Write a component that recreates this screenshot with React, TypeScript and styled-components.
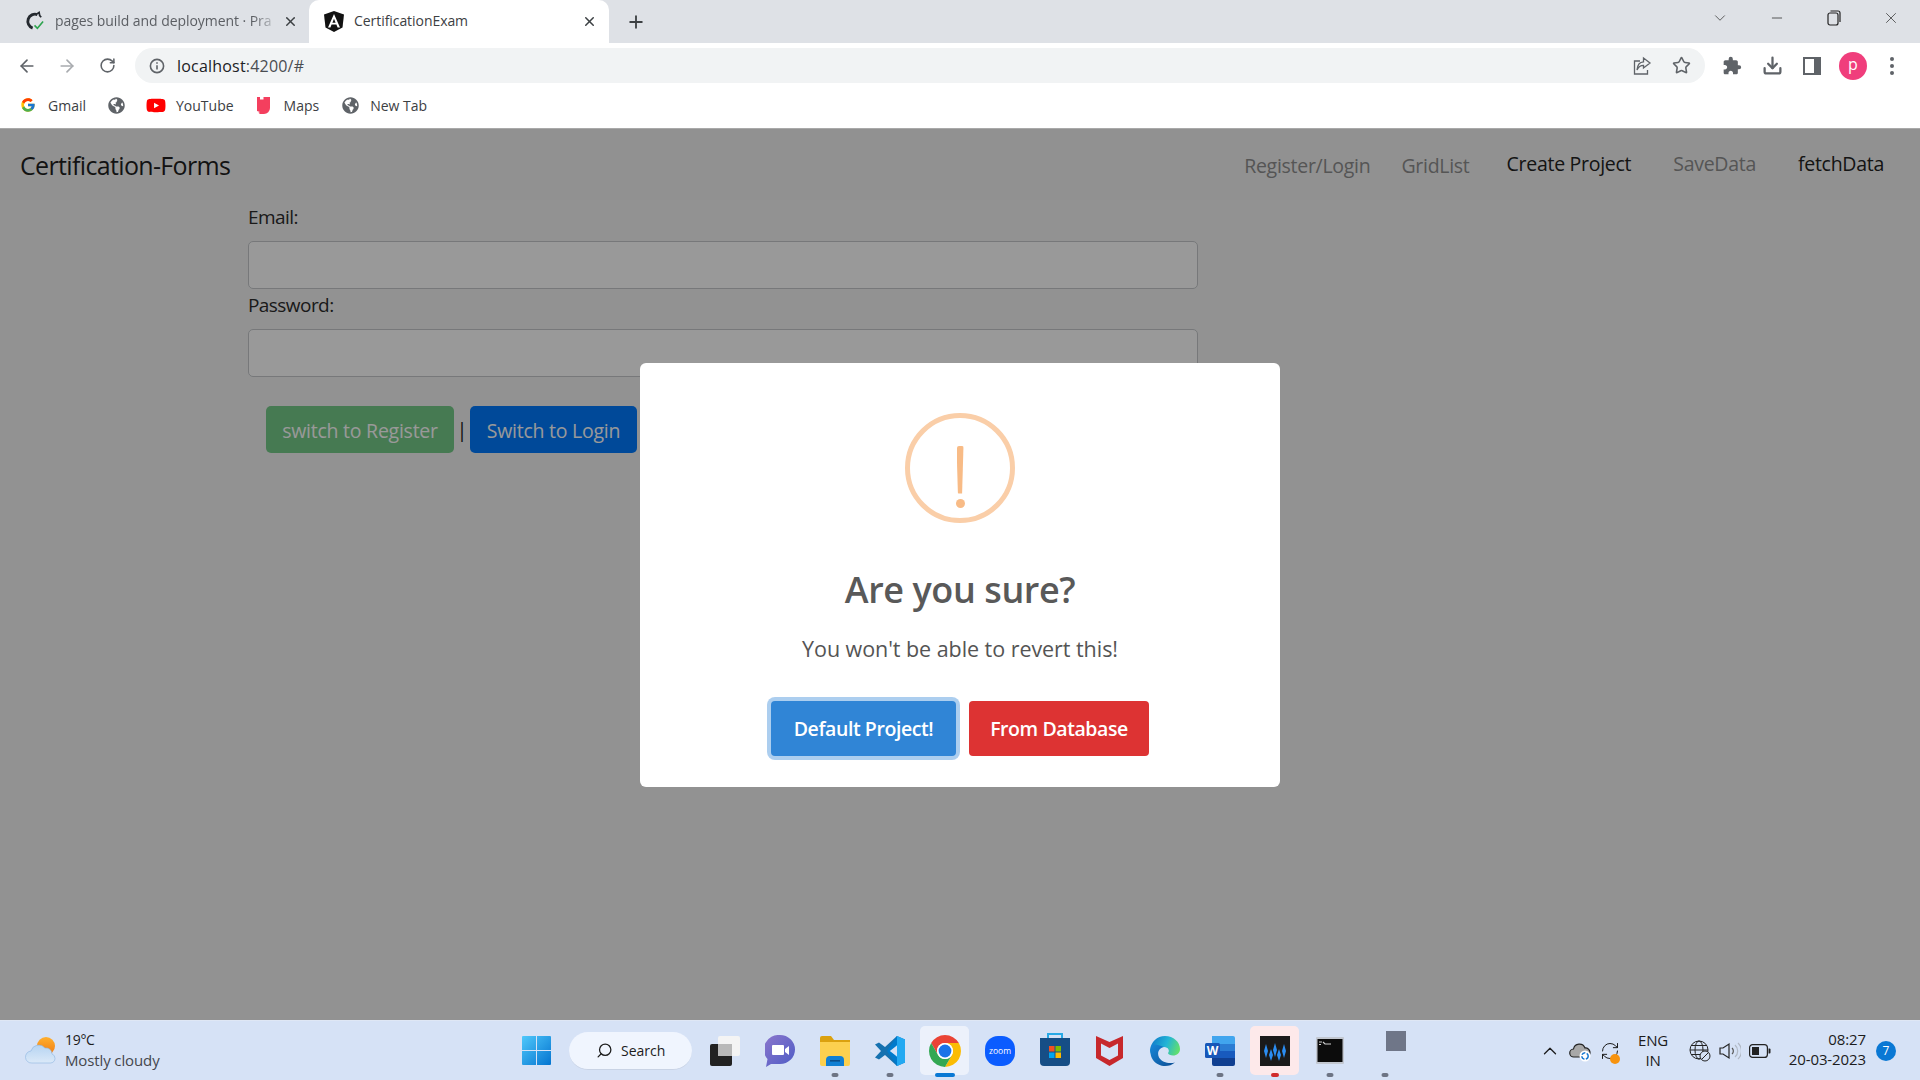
import React from "react";
import styled, { createGlobalStyle } from "styled-components";
import { ArrowLeft, ArrowRight, RotateCw, Star, Download, ChevronDown, ChevronUp, Minus, X, Plus, Search as SearchGlyph, RefreshCw } from "lucide-react";
import { FaGlobeAmericas, FaYoutube } from "react-icons/fa";
import { MdExtension } from "react-icons/md";
import { FcGoogle } from "react-icons/fc";

const FONT = `"Open Sans", "Noto Sans", "Liberation Sans", sans-serif`;

const Global = createGlobalStyle`
  html, body { margin: 0; padding: 0; height: 100%; }
  body { font-family: ${FONT}; overflow: hidden; }
  #root { height: 100%; }
  * { box-sizing: border-box; }
`;

const Screen = styled.div`
  width: 1920px; height: 1080px; display: flex; flex-direction: column; background: #fff;
`;

/* ---------- browser chrome ---------- */
const TabStrip = styled.div`
  height: 43px; background: #dee1e6; display: flex; align-items: stretch; flex: none;
`;
const Tab = styled.div<{ $active?: boolean }>`
  width: ${p => (p.$active ? "300px" : "309px")};
  padding-left: ${p => (p.$active ? "15px" : "25px")};
  padding-right: ${p => (p.$active ? "12px" : "11px")};
  background: ${p => (p.$active ? "#fff" : "transparent")};
  border-radius: 10px 10px 0 0;
  display: flex; align-items: center; flex: none; position: relative;
`;
const FavIcon = styled.span`
  width: 20px; height: 20px; flex: none; display: flex; align-items: center; justify-content: center;
`;
const TabTitle = styled.span<{ $fade?: boolean }>`
  margin: 0 0 2px 10px; flex: 1; min-width: 0; white-space: nowrap;
  font-size: 14px; letter-spacing: -0.06px; color: ${p => (p.$fade ? "#5b5e63" : "#3c4043")};
  ${p => p.$fade && "mask-image: linear-gradient(to right, #000 87%, transparent 99%);"}
`;
const TabClose = styled.span`
  width: 16px; height: 16px; flex: none; display: flex; align-items: center; justify-content: center; color: #3c4043;
`;
const NewTab = styled.span`
  margin-left: 17px; align-self: center; display: flex; color: #3c4043;
`;
const WindowControls = styled.div`
  margin-left: auto; display: flex; align-items: flex-start; padding-top: 9px; padding-right: 20px; color: #333;
`;
const WinBtn = styled.span<{ $ml: number }>`
  margin-left: ${p => p.$ml}px; display: flex; width: 18px; height: 18px; align-items: center; justify-content: center;
`;

const Toolbar = styled.div`
  height: 43px; flex: none; display: flex; align-items: center; padding: 5px 0 3px 17px; background: #fff;
`;
const NavBtn = styled.span<{ $ml?: number; $dim?: boolean }>`
  margin-left: ${p => p.$ml ?? 0}px; display: flex; width: 20px; height: 20px; align-items: center; justify-content: center;
  color: ${p => (p.$dim ? "#a8abaf" : "#5f6368")};
`;
const Omnibox = styled.div`
  margin-left: 18px; width: 1570px; height: 35px; border-radius: 18px; background: #f1f3f4;
  display: flex; align-items: center; padding-left: 14px; padding-right: 14px;
`;
const UrlText = styled.span`
  margin-left: 12px; font-size: 16px; letter-spacing: 0.2px; color: #202124;
`;
const UrlTail = styled.span`
  color: #4a4d51;
`;
const OmniRight = styled.div`
  margin-left: auto; display: flex; align-items: center; gap: 20px; color: #5f6368;
`;
const ExtIcons = styled.div`
  margin-left: 17px; display: flex; align-items: center; color: #5f6368;
`;
const ExtBtn = styled.span<{ $w: number }>`
  width: ${p => p.$w}px; display: flex; justify-content: center; align-items: center;
`;
const Avatar = styled.span`
  width: 28px; height: 28px; border-radius: 50%; background: #f03e7c; color: #fff;
  font-size: 16px; display: flex; align-items: center; justify-content: center; padding-bottom: 3px;
`;

const Bookmarks = styled.div`
  height: 43px; flex: none; display: flex; align-items: center; padding: 0 0 4px 18px; background: #fff;
  border-bottom: 1px solid #a9a9a9;
`;
const Bookmark = styled.div<{ $ml: number }>`
  margin-left: ${p => p.$ml}px; display: flex; align-items: center; gap: 10px;
  font-size: 14px; letter-spacing: 0; color: #3c4043;
`;
const BookmarkIcon = styled.span<{ $color?: string }>`
  width: 20px; height: 20px; display: flex; align-items: center; justify-content: center; color: ${p => p.$color ?? "#5f6368"};
`;

/* ---------- app page ---------- */
const Page = styled.div`
  flex: 1; position: relative; background: #f4f4f4; display: flex; flex-direction: column;
`;
const Navbar = styled.nav`
  height: 71px; flex: none; display: flex; align-items: center; padding-left: 20px; background: #f2f2f2;
`;
const Brand = styled.div`
  font-size: 25px; letter-spacing: -0.65px; color: #1f1f1f;
`;
const NavLinks = styled.div`
  margin-left: auto; padding-right: 36px; display: flex; align-items: center;
`;
const NavLink = styled.span<{ $ml: number; $strong?: boolean; $drop?: number }>`
  margin-left: ${p => p.$ml}px; margin-top: ${p => p.$drop ?? 0}px; font-size: 19.5px; letter-spacing: -0.28px;
  color: ${p => (p.$strong ? "#222" : "#8e8e8e")};
`;
const Form = styled.form`
  margin-left: 248px; width: 950px; padding-top: 4px; display: flex; flex-direction: column;
`;
const Label = styled.label`
  display: block; height: 27px; line-height: 27px; margin: 0 0 10px; font-size: 19px; letter-spacing: -0.56px; color: #2c2c2c;
  input + & { margin-top: 3px; }
`;
const Input = styled.input`
  height: 48px; width: 100%; background: #fff; border: 1px solid #c6c9cc; border-radius: 5px; display: block;
`;
const FormActions = styled.div`
  display: flex; align-items: center; margin: 29px 0 0 18px; color: #333;
`;
const ActionButton = styled.button<{ $bg: string; $w: number; $fg?: string }>`
  width: ${p => p.$w}px; height: 47px; background: ${p => p.$bg}; color: ${p => p.$fg ?? "#fff"}; border: 0; border-radius: 5px;
  font-family: ${FONT}; font-size: 19.5px; letter-spacing: -0.25px; padding: 2px 0 0;
`;
const Divider = styled.span`
  width: 16px; text-align: center; font-size: 20px; color: #222;
`;
const Overlay = styled.div`
  position: absolute; inset: 0; background: rgba(0, 0, 0, 0.4); display: flex; align-items: center; justify-content: center;
`;
const Modal = styled.div`
  width: 640px; height: 424px; background: #fff; border-radius: 6px; padding-top: 50px;
  display: flex; flex-direction: column; align-items: center;
`;
const WarnIcon = styled.div`
  width: 110px; height: 110px; border-radius: 50%; border: 5px solid #facea8; display: flex; flex-direction: column; align-items: center; flex: none;
`;
const WarnBar = styled.span`
  width: 7px; height: 48px; background: #f8bb86; border-radius: 2px; margin-top: 28px;
  clip-path: polygon(0 0, 100% 0, 80% 100%, 20% 100%);
`;
const WarnDot = styled.span`
  width: 9px; height: 9px; background: #f8bb86; border-radius: 50%; margin-top: 5px;
`;
const Title = styled.h2`
  margin: 42px 0 0; height: 50px; line-height: 50px; font-size: 36px; font-weight: 600; letter-spacing: -0.42px; color: #595959;
`;
const Subtitle = styled.p`
  margin: 19px 0 0; height: 30px; line-height: 30px; font-size: 21.5px; letter-spacing: -0.05px; color: #545454;
`;
const ModalActions = styled.div`
  margin-top: 37px; display: flex; gap: 13px;
`;
const ModalButton = styled.button<{ $bg: string; $w: number; $focus?: boolean }>`
  width: ${p => p.$w}px; height: 55px; border: 0; border-radius: 4px; background: ${p => p.$bg}; color: #fff; padding: 0;
  font-family: ${FONT}; font-size: 19.5px; font-weight: 600; letter-spacing: -0.42px;
  ${p => p.$focus && "box-shadow: 0 0 0 4px rgba(48, 133, 214, 0.4);"}
`;

/* ---------- taskbar ---------- */
const Taskbar = styled.div`
  height: 60px; flex: none; background: #d6e2f6; border-top: 1px solid #dfe7f5; display: flex; align-items: center; padding-left: 25px; padding-right: 24px;
`;
const Weather = styled.div`
  width: 497px; flex: none; display: flex; align-items: center; gap: 8px;
`;
const WeatherText = styled.div`
  font-size: 14px; line-height: 20px; letter-spacing: -0.3px; color: #1c1c1c; padding-bottom: 2px;
`;
const WeatherSub = styled.div`
  font-size: 15px; letter-spacing: -0.12px; color: #45474d;
`;
const SearchPill = styled.div`
  width: 123px; height: 38px; margin-left: 18px; flex: none; background: #f0f5fe; border-radius: 19px; border-bottom: 1px solid #c9d3e5;
  display: flex; align-items: center; padding-left: 27px; gap: 8px; font-size: 14px; letter-spacing: 0; color: #1c1c1c;
`;
const Slots = styled.div`
  margin-left: 5px; display: flex; align-items: stretch; height: 59px;
`;
const Slot = styled.div`
  width: 55px; display: flex; align-items: center; justify-content: center; position: relative;
`;
const SlotHighlight = styled.div<{ $bg: string }>`
  width: 49px; height: 49px; border-radius: 5px; background: ${p => p.$bg}; display: flex; align-items: center; justify-content: center;
`;
const Indicator = styled.span<{ $w?: number; $color?: string }>`
  position: absolute; bottom: 3px; left: 50%; transform: translateX(-50%); width: ${p => p.$w ?? 7}px; height: 4px; border-radius: 2px; background: ${p => p.$color ?? "#6d7484"};
`;
const GreySquare = styled.span`
  width: 20px; height: 20px; background: #6f7688; margin: -20px 0 0 22px;
`;
const Tray = styled.div`
  margin-left: auto; display: flex; align-items: center; color: #1c1c1c;
`;
const TrayItem = styled.span<{ $w?: number }>`
  width: ${p => p.$w ?? 30}px; display: flex; align-items: center; justify-content: center; position: relative;
`;
const Lang = styled.div`
  width: 56px; margin-right: 4px; padding-bottom: 2px; text-align: center; font-size: 15px; line-height: 20px; letter-spacing: -0.2px; color: #1c1c1c;
`;
const Clock = styled.div`
  width: 91px; padding-bottom: 3px; text-align: right; font-size: 15px; line-height: 20px; letter-spacing: -0.1px; color: #1c1c1c;
`;
const Badge = styled.span`
  width: 20px; height: 20px; margin-left: 10px; border-radius: 50%; background: #0a78d4; color: #fff; font-size: 12px;
  display: flex; align-items: center; justify-content: center;
`;
const SyncDot = styled.span`
  position: absolute; right: 5px; bottom: -3px; width: 10px; height: 10px; border-radius: 50%; background: #f7930e;
`;

/* ---------- drawn icons ---------- */
const GithubRunIcon = () => (
  <svg width="21" height="21" viewBox="0 0 21 21" fill="none">
    <path d="M13 3.200A7.300 7.300 0 1 0 8 17.400" stroke="#24292f" strokeWidth="3" />
    <path d="M12.500 2.500l2.300-1.500.6 3.200 1.600 1.900" stroke="#24292f" strokeWidth="1.800" />
    <path d="M10 14.600l3 3 6-7" stroke="#2da44e" strokeWidth="1.700" />
  </svg>
);
const AngularIcon = () => (
  <svg width="20" height="21" viewBox="0 0 20 21">
    <path fill="#111" d="M10 0l10 3.500-1.500 12.900L10 21l-8.500-4.600L0 3.500z" />
    <path fill="#fff" d="M10 3L4 16.500h2.400l1.200-3h4.800l1.200 3H16zM10 7.800l1.600 3.900H8.400z" fillRule="evenodd" />
  </svg>
);
const InfoIcon = () => (
  <svg width="16" height="16" viewBox="0 0 16 16" fill="none" stroke="#5f6368" strokeWidth="1.600">
    <circle cx="8" cy="8" r="6.600" /><path d="M8 7.200v4.200" /><path d="M8 4.200v1.600" />
  </svg>
);
const ShareIcon = () => (
  <svg width="20" height="20" viewBox="0 0 20 20" fill="none" stroke="#5f6368" strokeWidth="1.300">
    <path d="M8 5H2.500v13h13v-4" /><path d="M11.500 2l6.500 5-6.500 5V9.300C8.500 9.300 6.500 10.500 5 14c.4-5 2.800-8 6.500-8.200z" />
  </svg>
);
const PanelIcon = () => (
  <svg width="18" height="18" viewBox="0 0 18 18"><path fillRule="evenodd" fill="#5f6368" d="M0 0h18v18H0zM2 2v14h9V2z" /></svg>
);
const KebabIcon = () => (
  <svg width="16" height="20" viewBox="0 0 16 20" fill="#5f6368"><circle cx="8" cy="3" r="2" /><circle cx="8" cy="10" r="2" /><circle cx="8" cy="17" r="2" /></svg>
);
const RestoreIcon = () => (
  <svg width="14" height="16" viewBox="0 0 14 16" fill="none" stroke="#222" strokeWidth="1.200">
    <rect x="1" y="3" width="10" height="12" rx="2" /><path d="M3.500 1H11a2 2 0 0 1 2 2v9" />
  </svg>
);
const MapsIcon = () => (
  <svg width="13" height="17" viewBox="0 0 13 17"><path fill="#f43f5e" d="M0 0h3v2.500h3.500V0H13v11a6 6 0 0 1-6 6H3l-1.600-1.200L3 15 0 14z" /></svg>
);
const WeatherIcon = () => (
  <svg width="32" height="30" viewBox="0 0 32 30">
    <defs>
      <linearGradient id="sun" x1="0" y1="0" x2="0" y2="1"><stop offset="0" stopColor="#ffb02e" /><stop offset="1" stopColor="#f07b14" /></linearGradient>
      <linearGradient id="cloud" x1="0" y1="0" x2="0" y2="1"><stop offset="0" stopColor="#b6d4f2" /><stop offset="1" stopColor="#dbe9f8" /></linearGradient>
    </defs>
    <circle cx="21" cy="10" r="9" fill="url(#sun)" />
    <path fill="url(#cloud)" stroke="#8db6e0" strokeWidth=".6" d="M7 27a6 6 0 0 1-1-12 8 8 0 0 1 14-3 6 6 0 0 1 7 6 4.600 4.600 0 0 1 3 4.400A4.600 4.600 0 0 1 25.500 27z" />
  </svg>
);
const WindowsIcon = () => (
  <svg width="29" height="29" viewBox="0 0 29 29" style={{ flex: "none" }}>
    <defs><linearGradient id="win" x1="0" y1="0" x2="1" y2="1"><stop offset="0" stopColor="#4fc8fb" /><stop offset="1" stopColor="#0474d0" /></linearGradient></defs>
    <path fill="url(#win)" d="M0 1a1 1 0 0 1 1-1h13v14H0zM15 0h13a1 1 0 0 1 1 1v13H15zM0 15h14v14H1a1 1 0 0 1-1-1zM15 15h14v13a1 1 0 0 1-1 1H15z" />
  </svg>
);
const StackIcon = () => (
  <svg width="30" height="30" viewBox="0 0 30 30">
    <rect x="8" y="0" width="22" height="20" rx="2" fill="#f4f4f4" />
    <rect x="0" y="8" width="22" height="22" rx="2" fill="#222" />
    <rect x="8" y="8" width="14" height="12" fill="#b9b9b9" />
  </svg>
);
const ChatIcon = () => (
  <svg width="30" height="32" viewBox="0 0 30 32">
    <defs><linearGradient id="chat" x1="0" y1="0" x2="1" y2="1"><stop offset="0" stopColor="#8c76cc" /><stop offset="1" stopColor="#4d5cc6" /></linearGradient></defs>
    <path fill="url(#chat)" d="M15 0a15 14.500 0 0 1 0 29H6l-5 3 1.500-8A15 14.500 0 0 1 15 0z" />
    <path fill="#fff" d="M8 10h10a1 1 0 0 1 1 1v8a1 1 0 0 1-1 1H8a1 1 0 0 1-1-1v-8a1 1 0 0 1 1-1zM20 14l4-3v9l-4-3z" />
  </svg>
);
const FolderIcon = () => (
  <svg width="30" height="30" viewBox="0 0 30 30">
    <path fill="#dba10f" d="M0 2a2 2 0 0 1 2-2h9l3 4h16v6H0z" />
    <path fill="#fcd04f" d="M0 6h30v22a2 2 0 0 1-2 2H2a2 2 0 0 1-2-2z" />
    <path fill="#0f7fd4" d="M6 30v-6a4 4 0 0 1 4-4h10a4 4 0 0 1 4 4v6z" />
    <rect x="10" y="24" width="10" height="1.600" fill="#0a4e8a" />
  </svg>
);
const VSCodeIcon = () => (
  <svg width="30" height="30" viewBox="0 0 30 30">
    <path fill="#0065a9" d="M22 0 10 11 4 6.500 0 8.500l6 6.500-6 6.500 4 2L10 19l12 11z" opacity=".9" />
    <path fill="#007acc" d="M22 0l8 3.500v23L22 30l-10-15z" />
    <path fill="#23a9f2" d="M22 0l8 3.500v23L22 30V21l-6-6 6-6z" />
    <path fill="#d6e2f6" d="M22 9.500v11L14.800 15z" />
  </svg>
);
const ChromeIcon = () => (
  <svg width="32" height="32" viewBox="4 4 40 40">
    <path fill="#ea4335" d="M6.680 14A20 20 0 0 1 41.320 14H24A10 10 0 0 0 15.340 29Z" />
    <path fill="#fbbc04" d="M41.320 14A20 20 0 0 1 24 44L32.660 29A10 10 0 0 0 24 14Z" />
    <path fill="#34a853" d="M24 44A20 20 0 0 1 6.680 14L15.340 29A10 10 0 0 0 32.660 29Z" />
    <circle cx="24" cy="24" r="10" fill="#fff" /><circle cx="24" cy="24" r="8" fill="#1a73e8" />
  </svg>
);
const ZoomIcon = () => (
  <svg width="30" height="30" viewBox="0 0 30 30">
    <rect width="30" height="30" rx="13" fill="#0b5cff" />
    <text x="15" y="18" textAnchor="middle" fontSize="8.500" fontFamily={FONT} fill="#fff">zoom</text>
  </svg>
);
const StoreIcon = () => (
  <svg width="30" height="34" viewBox="0 0 30 34" style={{ marginTop: -4 }}>
    <path fill="none" stroke="#27a9e6" strokeWidth="2" d="M8 8V2h14v6" />
    <path fill="#164e86" d="M0 6h30v24a4 4 0 0 1-4 4H4a4 4 0 0 1-4-4z" />
    <rect x="9" y="14" width="5.500" height="5.500" fill="#f25022" /><rect x="15.500" y="14" width="5.500" height="5.500" fill="#7fba00" />
    <rect x="9" y="20.500" width="5.500" height="5.500" fill="#00a4ef" /><rect x="15.500" y="20.500" width="5.500" height="5.500" fill="#ffb900" />
  </svg>
);
const McAfeeIcon = () => (
  <svg width="27" height="30" viewBox="0 0 27 30">
    <path fill="#c7282c" fillRule="evenodd" d="M0 0l13.500 6L27 0v22L13.500 30 0 22zM5 7.500v12L13.500 24l8.500-4.500v-12L13.500 12z" />
  </svg>
);
const EdgeIcon = () => (
  <svg width="30" height="30" viewBox="0 0 30 30">
    <defs>
      <linearGradient id="edge" x1="0" y1="0.2" x2="1" y2="0.5"><stop offset="0" stopColor="#0f77c8" /><stop offset=".55" stopColor="#23b5d6" /><stop offset="1" stopColor="#62df6d" /></linearGradient>
      <linearGradient id="edgeLow" x1="0" y1="0" x2="1" y2="1"><stop offset="0" stopColor="#1787d8" /><stop offset="1" stopColor="#0d4e94" /></linearGradient>
    </defs>
    <path fill="url(#edge)" d="M15 0c8.500 0 15 6 15 13 0 4-3 6.500-7 6.500-2.500 0-5-1-5-2.500 2-2 .5-6-4-6-5 0-8.500 5-6 10.500C5 23 0 19 0 14 1 6 7 0 15 0z" />
    <path fill="url(#edgeLow)" d="M2 9C0 13-.5 19 3 24c3 4 8 6 12 6 4 0 7-1 10-3.500-6 1.500-13 0-16-5-2.500-5 .5-10 5-10.500C9 9 5 8 2 9z" />
  </svg>
);
const WordIcon = () => (
  <svg width="30" height="30" viewBox="0 0 30 30">
    <path fill="#41a5ee" d="M7 0h21a2 2 0 0 1 2 2v7H7z" /><rect x="7" y="8" width="23" height="8" fill="#2b7cd3" />
    <rect x="7" y="15" width="23" height="8" fill="#185abd" /><path fill="#103f91" d="M7 22h23v6a2 2 0 0 1-2 2H9a2 2 0 0 1-2-2z" />
    <rect x="0" y="7" width="15" height="15" rx="1.500" fill="#1857b8" />
    <text x="7.500" y="19" textAnchor="middle" fontSize="12" fontWeight="700" fontFamily={FONT} fill="#fff">W</text>
  </svg>
);
const WavesIcon = () => (
  <svg width="30" height="30" viewBox="0 0 30 30">
    <rect width="30" height="30" fill="#1a1a1a" />
    <path fill="#2b8df2" d="M6 8l2 7-2 7-2-7zM11 13l2 6-2 6-2-6zM15 7l2 7-2 7-2-7zM19 13l2 6-2 6-2-6zM24 8l2 7-2 7-2-7z" />
  </svg>
);
const TerminalIcon = () => (
  <svg width="28" height="27" viewBox="0 0 28 27">
    <rect width="28" height="27" rx="1" fill="#c2c7d0" /><rect x="1.500" y="2" width="25" height="23" fill="#0c0c0c" />
    <path stroke="#cfcfcf" strokeWidth="1.200" fill="none" d="M3 5h3M3 7.500h2M7 5l2 2h6" />
  </svg>
);
const CloudTray = () => (
  <svg width="22" height="22" viewBox="0 0 22 22" style={{ flex: "none" }}>
    <path fill="#a8a8a8" stroke="#222" strokeWidth="1.200" d="M5 17a4 4 0 0 1-.5-8A6 6 0 0 1 16 8a4.500 4.500 0 0 1 1 9z" />
    <circle cx="16" cy="16" r="5.500" fill="#fff" /><circle cx="16" cy="16" r="3.200" fill="none" stroke="#1678d2" strokeWidth="1.500" strokeDasharray="4 1.500" />
  </svg>
);
const GlobeTray = () => (
  <svg width="22" height="22" viewBox="0 0 22 22" fill="none" stroke="#222" strokeWidth="1">
    <circle cx="10" cy="10" r="9" /><ellipse cx="10" cy="10" rx="4" ry="9" /><path d="M1 10h18M2 5.500h16M2 14.500h16" />
    <circle cx="16" cy="16" r="5" fill="#d6e2f6" /><path d="M12.800 19.200l6.400-6.400" />
  </svg>
);
const VolumeTray = () => (
  <svg width="22" height="20" viewBox="0 0 22 20" fill="none" strokeWidth="1.200">
    <path stroke="#222" d="M1 7v6h3l6 4V3L4 7z" /><path stroke="#555" d="M13 7a4 4 0 0 1 0 6" /><path stroke="#b0b8c4" d="M16 4a8 8 0 0 1 0 12M19 2a11 11 0 0 1 0 16" />
  </svg>
);
const BatteryTray = () => (
  <svg width="22" height="14" viewBox="0 0 22 14">
    <rect x=".6" y=".6" width="17.800" height="12.800" rx="3" fill="none" stroke="#222" strokeWidth="1.200" />
    <rect x="3" y="3" width="7" height="8" fill="#222" /><path d="M19.500 4.500h1a1 1 0 0 1 1 1v3a1 1 0 0 1-1 1h-1z" fill="#222" />
  </svg>
);

const taskIcons = [
  { key: "stack", icon: <StackIcon /> },
  { key: "chat", icon: <ChatIcon /> },
  { key: "folder", icon: <FolderIcon />, dot: true },
  { key: "code", icon: <VSCodeIcon />, dot: true },
  { key: "chrome", icon: <ChromeIcon />, hl: "#ecf1fb", dot: true, w: 20, color: "#0a78d4" },
  { key: "zoom", icon: <ZoomIcon /> },
  { key: "store", icon: <StoreIcon /> },
  { key: "mcafee", icon: <McAfeeIcon /> },
  { key: "edge", icon: <EdgeIcon /> },
  { key: "word", icon: <WordIcon />, dot: true },
  { key: "waves", icon: <WavesIcon />, hl: "#fde9ea", dot: true, w: 8, color: "#d12b2b" },
  { key: "term", icon: <TerminalIcon />, dot: true },
];

export default function App() {
  return (
    <Screen>
      <Global />
      <TabStrip>
        <Tab>
          <FavIcon><GithubRunIcon /></FavIcon>
          <TabTitle $fade>pages build and deployment · Pra</TabTitle>
          <TabClose><X size={15} strokeWidth={2.4} /></TabClose>
        </Tab>
        <Tab $active>
          <FavIcon><AngularIcon /></FavIcon>
          <TabTitle>CertificationExam</TabTitle>
          <TabClose><X size={15} strokeWidth={2.4} /></TabClose>
        </Tab>
        <NewTab><Plus size={20} strokeWidth={2.2} /></NewTab>
        <WindowControls>
          <WinBtn $ml={0}><ChevronDown size={18} strokeWidth={1} /></WinBtn>
          <WinBtn $ml={39}><Minus size={16} strokeWidth={1.2} /></WinBtn>
          <WinBtn $ml={39}><RestoreIcon /></WinBtn>
          <WinBtn $ml={39}><X size={20} strokeWidth={1} /></WinBtn>
        </WindowControls>
      </TabStrip>

      <Toolbar>
        <NavBtn><ArrowLeft size={20} strokeWidth={2} /></NavBtn>
        <NavBtn $ml={20} $dim><ArrowRight size={20} strokeWidth={2} /></NavBtn>
        <NavBtn $ml={20}><RotateCw size={17} strokeWidth={2.2} /></NavBtn>
        <Omnibox>
          <InfoIcon />
          <UrlText>localhost<UrlTail>:4200/#</UrlTail></UrlText>
          <OmniRight>
            <ShareIcon />
            <Star size={19} strokeWidth={2} />
          </OmniRight>
        </Omnibox>
        <ExtIcons>
          <ExtBtn $w={20}><MdExtension size={22} /></ExtBtn>
          <ExtBtn $w={60}><Download size={21} strokeWidth={2.6} /></ExtBtn>
          <ExtBtn $w={20}><PanelIcon /></ExtBtn>
          <ExtBtn $w={62}><Avatar>p</Avatar></ExtBtn>
          <ExtBtn $w={16}><KebabIcon /></ExtBtn>
        </ExtIcons>
      </Toolbar>

      <Bookmarks>
        <Bookmark $ml={0}><BookmarkIcon><FcGoogle size={16} /></BookmarkIcon>Gmail</Bookmark>
        <Bookmark $ml={20}><BookmarkIcon><FaGlobeAmericas size={17} /></BookmarkIcon></Bookmark>
        <Bookmark $ml={20}><BookmarkIcon $color="#f00"><FaYoutube size={23} /></BookmarkIcon>YouTube</Bookmark>
        <Bookmark $ml={20}><BookmarkIcon><MapsIcon /></BookmarkIcon>Maps</Bookmark>
        <Bookmark $ml={21}><BookmarkIcon><FaGlobeAmericas size={17} /></BookmarkIcon>New Tab</Bookmark>
      </Bookmarks>

      <Page>
        <Navbar>
          <Brand>Certification-Forms</Brand>
          <NavLinks>
            <NavLink $ml={0} $drop={1}>Register/Login</NavLink>
            <NavLink $ml={31} $drop={2}>GridList</NavLink>
            <NavLink $ml={37} $drop={-2} $strong>Create Project</NavLink>
            <NavLink $ml={42} $drop={-2}>SaveData</NavLink>
            <NavLink $ml={42} $drop={-2} $strong>fetchData</NavLink>
          </NavLinks>
        </Navbar>
        <Form>
          <Label>Email:</Label>
          <Input type="text" />
          <Label>Password:</Label>
          <Input type="password" />
          <FormActions>
            <ActionButton type="button" $bg="#76cb89" $w={188}>switch to Register</ActionButton>
            <Divider>|</Divider>
            <ActionButton type="button" $bg="#007bff" $w={167}>Switch to Login</ActionButton>
          </FormActions>
        </Form>
        <Overlay>
          <Modal>
            <WarnIcon><WarnBar /><WarnDot /></WarnIcon>
            <Title>Are you sure?</Title>
            <Subtitle>You won't be able to revert this!</Subtitle>
            <ModalActions>
              <ModalButton $bg="#3085d6" $w={185} $focus>Default Project!</ModalButton>
              <ModalButton $bg="#dd3333" $w={180}>From Database</ModalButton>
            </ModalActions>
          </Modal>
        </Overlay>
      </Page>

      <Taskbar>
        <Weather>
          <WeatherIcon />
          <WeatherText>19°C<WeatherSub>Mostly cloudy</WeatherSub></WeatherText>
        </Weather>
        <WindowsIcon />
        <SearchPill><SearchGlyph size={17} strokeWidth={1.8} style={{ transform: "scaleX(-1)" }} />Search</SearchPill>
        <Slots>
          {taskIcons.map(t => (
            <Slot key={t.key}>
              {t.hl ? <SlotHighlight $bg={t.hl}>{t.icon}</SlotHighlight> : t.icon}
              {t.dot && <Indicator $w={t.w} $color={t.color} />}
            </Slot>
          ))}
          <Slot><GreySquare /><Indicator /></Slot>
        </Slots>
        <Tray>
          <TrayItem><ChevronUp size={22} strokeWidth={1.4} /></TrayItem>
          <TrayItem><CloudTray /></TrayItem>
          <TrayItem><RefreshCw size={20} strokeWidth={1.2} /><SyncDot /></TrayItem>
          <Lang>ENG<br />IN</Lang>
          <TrayItem><GlobeTray /></TrayItem>
          <TrayItem><VolumeTray /></TrayItem>
          <TrayItem><BatteryTray /></TrayItem>
          <Clock>08:27<br />20-03-2023</Clock>
          <Badge>7</Badge>
        </Tray>
      </Taskbar>
    </Screen>
  );
}
